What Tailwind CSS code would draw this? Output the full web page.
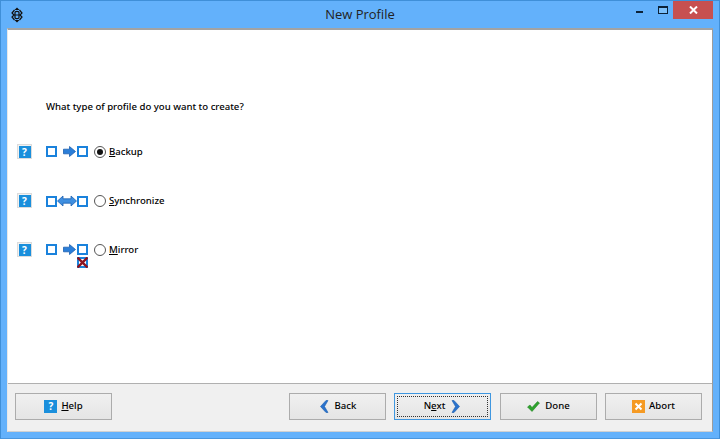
<!DOCTYPE html>
<html lang="en">
<head>
    <meta charset="UTF-8">
    <title>New Profile</title>
    <script src="https://cdn.jsdelivr.net/npm/@tailwindcss/browser@4"></script>
</head>
<body class="m-0 w-[720px] h-[439px] overflow-hidden bg-[#63b1fb] font-['Noto_Sans',sans-serif] font-medium text-[9.6px] text-black">
<div class="w-[720px] h-[439px] flex flex-col border border-[#3f8fd8] border-b-[#4a96de]">
    <!-- title bar -->
    <div class="h-[27px] flex items-center relative">
        <svg class="ml-[10px] mt-[1px]" width="12" height="16" viewBox="0 0 12 16" fill="none" stroke="#111" stroke-width="1.2">
            <path d="M6 .5 8.5 3H3.5ZM6 15.5 3.5 13H8.5Z" fill="#111" stroke="none"/>
            <path d="M3.5 3 1 6 3 8 1 10 3.5 13M8.5 3 11 6 9 8 11 10 8.5 13M3 8H9M4 5.5C4 4 8 4 8 5.5V10.5C8 12 4 12 4 10.5Z"/>
        </svg>
        <div class="absolute inset-x-0 top-[4px] text-center font-['Open_Sans',sans-serif] font-normal text-[13px] leading-[18px] text-[#222]">New Profile</div>
        <div class="ml-auto flex items-start self-start">
            <div class="w-[27px] h-[18px] flex justify-center items-start pt-[10px]"><div class="w-[7px] h-[2px] bg-[#0c2238]"></div></div>
            <div class="w-[20px] h-[18px] flex justify-center items-start pt-[5px]"><div class="w-[10px] h-[8px] border border-t-2 border-[#0c2238] bg-[#7cc0fb]"></div></div>
            <div class="w-[40px] h-[18px] bg-[#c75050] flex justify-center items-center mr-[6px]">
                <svg width="9" height="8" viewBox="0 0 9 8" stroke="#fff" stroke-width="2"><path d="M1 0.5 8 7.5M8 0.5 1 7.5"/></svg>
            </div>
        </div>
    </div>
    <!-- client area -->
    <div class="mx-[6px] mb-[6px] flex-1 flex flex-col border border-[#e8e8e8] border-t-2 border-t-[#a3a3a3] border-b-[#d0d0d0] border-r-[#9c9c9c] bg-white">
        <div class="flex-1 flex flex-col pl-[9px] pt-[70px]">
            <p class="pl-[29px] leading-[14px] h-[44px]">What type of profile do you want to create?</p>
            <!-- Backup -->
            <div class="h-[49px] flex items-start">
                <div class="w-[15px] h-[15px] flex items-center justify-center border border-[#dcdcdc] bg-[#f2f2f2]"><span class="w-[12px] h-[12px] bg-[#1a8fdc] text-white font-bold text-[10px] leading-[12px] text-center">?</span></div>
                <div class="ml-[14px] mt-[2px] flex items-center">
                    <div class="w-[11px] h-[11px] border-2 border-[#1a82dc]"></div>
                    <svg class="ml-[6px] mr-[1px]" width="13" height="11" viewBox="0 0 13 11"><path d="M.5 3.2H6.5V.5L12.5 5.5 6.5 10.5V7.8H.5Z" fill="#2b7ed8" stroke="#1c5fb0" stroke-width=".8"/></svg>
                    <div class="w-[11px] h-[11px] border-2 border-[#1a82dc]"></div>
                </div>
                <div class="ml-[6px] mt-[2px] w-[12px] h-[12px] rounded-full border border-[#555] bg-white flex items-center justify-center"><div class="w-[6px] h-[6px] rounded-full bg-[#111]"></div></div>
                <span class="ml-[3px] mt-[1px] leading-[14px]"><u>B</u>ackup</span>
            </div>
            <!-- Synchronize -->
            <div class="h-[49px] flex items-start">
                <div class="w-[15px] h-[15px] flex items-center justify-center border border-[#dcdcdc] bg-[#f2f2f2]"><span class="w-[12px] h-[12px] bg-[#1a8fdc] text-white font-bold text-[10px] leading-[12px] text-center">?</span></div>
                <div class="ml-[14px] mt-[2px] flex items-center">
                    <div class="w-[11px] h-[11px] border-2 border-[#1a82dc]"></div>
                    <svg width="20" height="12" viewBox="0 0 20 12"><path d="M.5 6 6 1V3.8H14V1L19.5 6 14 11V8.2H6V11Z" fill="#3f8fe0" stroke="#1c5fb0" stroke-width=".8"/></svg>
                    <div class="w-[11px] h-[11px] border-2 border-[#1a82dc]"></div>
                </div>
                <div class="ml-[6px] mt-[2px] w-[12px] h-[12px] rounded-full border border-[#555] bg-white"></div>
                <span class="ml-[3px] mt-[1px] leading-[14px]"><u>S</u>ynchronize</span>
            </div>
            <!-- Mirror -->
            <div class="h-[49px] flex items-start">
                <div class="w-[15px] h-[15px] flex items-center justify-center border border-[#dcdcdc] bg-[#f2f2f2]"><span class="w-[12px] h-[12px] bg-[#1a8fdc] text-white font-bold text-[10px] leading-[12px] text-center">?</span></div>
                <div class="ml-[14px] mt-[2px] flex flex-col items-end">
                    <div class="flex items-center">
                        <div class="w-[11px] h-[11px] border-2 border-[#1a82dc]"></div>
                        <svg class="ml-[6px] mr-[1px]" width="13" height="11" viewBox="0 0 13 11"><path d="M.5 3.2H6.5V.5L12.5 5.5 6.5 10.5V7.8H.5Z" fill="#2b7ed8" stroke="#1c5fb0" stroke-width=".8"/></svg>
                        <div class="w-[11px] h-[11px] border-2 border-[#1a82dc]"></div>
                    </div>
                    <svg class="mt-[2px]" width="11" height="11" viewBox="0 0 11 11" fill="none">
                        <rect x="1" y="1" width="9" height="9" stroke="#1a82dc" stroke-width="2"/>
                        <path d="M.5 .5 10.5 10.5M10.5 .5 .5 10.5" stroke="#8c1420" stroke-width="2.4"/>
                    </svg>
                </div>
                <div class="ml-[6px] mt-[2px] w-[12px] h-[12px] rounded-full border border-[#555] bg-white"></div>
                <span class="ml-[3px] mt-[1px] leading-[14px]"><u>M</u>irror</span>
            </div>
        </div>
        <!-- button bar -->
        <div class="h-[48px] bg-[#f0f0f0] border-t border-[#b0b0b0] flex items-start pt-[9px] pl-[7px] pr-[10px]">
            <button class="w-[97px] h-[27px] flex items-center justify-center border border-[#acacac] bg-gradient-to-b from-[#f0f0f0] to-[#e5e5e5]">
                <span class="w-[13px] h-[13px] bg-[#1a8fdc] text-white font-bold text-[10px] leading-[13px] text-center">?</span>
                <span class="ml-[4px]"><u>H</u>elp</span>
            </button>
            <button class="ml-auto w-[97px] h-[27px] flex items-center justify-center border border-[#acacac] bg-gradient-to-b from-[#f0f0f0] to-[#e5e5e5]">
                <svg width="10" height="13" viewBox="0 0 9 13"><path d="M6.5 .5 1 6.5 6.5 12.5H8.5L5 6.5 8.5 .5Z" fill="#2a72cc" stroke="#1c5fb0" stroke-width=".6"/></svg>
                <span class="ml-[6px]">Back</span>
            </button>
            <button class="ml-[8px] w-[97px] h-[27px] p-[2px] border border-[#3f97e0] bg-gradient-to-b from-[#f0f0f0] to-[#e5e5e5]">
                <span class="w-full h-full flex items-center justify-center border border-dotted border-[#333]">
                    <span>N<u>e</u>xt</span>
                    <svg class="ml-[6px]" width="10" height="13" viewBox="0 0 9 13"><path d="M2.5 .5 8 6.5 2.5 12.5H.5L4 6.5 .5 .5Z" fill="#2a72cc" stroke="#1c5fb0" stroke-width=".6"/></svg>
                </span>
            </button>
            <button class="ml-[9px] w-[97px] h-[27px] flex items-center justify-center border border-[#acacac] bg-gradient-to-b from-[#f0f0f0] to-[#e5e5e5]">
                <svg width="13" height="11" viewBox="0 0 13 11"><path d="M.5 6 3 4 5 6.5 10.5 .5 12.5 2 5 10.5Z" fill="#2ea32e" stroke="#1d7d1d" stroke-width=".5"/></svg>
                <span class="ml-[5px]">Done</span>
            </button>
            <button class="ml-[8px] w-[97px] h-[27px] flex items-center justify-center border border-[#acacac] bg-gradient-to-b from-[#f0f0f0] to-[#e5e5e5]">
                <svg width="13" height="13" viewBox="0 0 13 13"><rect width="13" height="13" fill="#f59a23"/><path d="M3.5 3.5 9.5 9.5M9.5 3.5 3.5 9.5" stroke="#fff" stroke-width="2"/></svg>
                <span class="ml-[4px]">Abort</span>
            </button>
        </div>
    </div>
</div>
</body>
</html>
